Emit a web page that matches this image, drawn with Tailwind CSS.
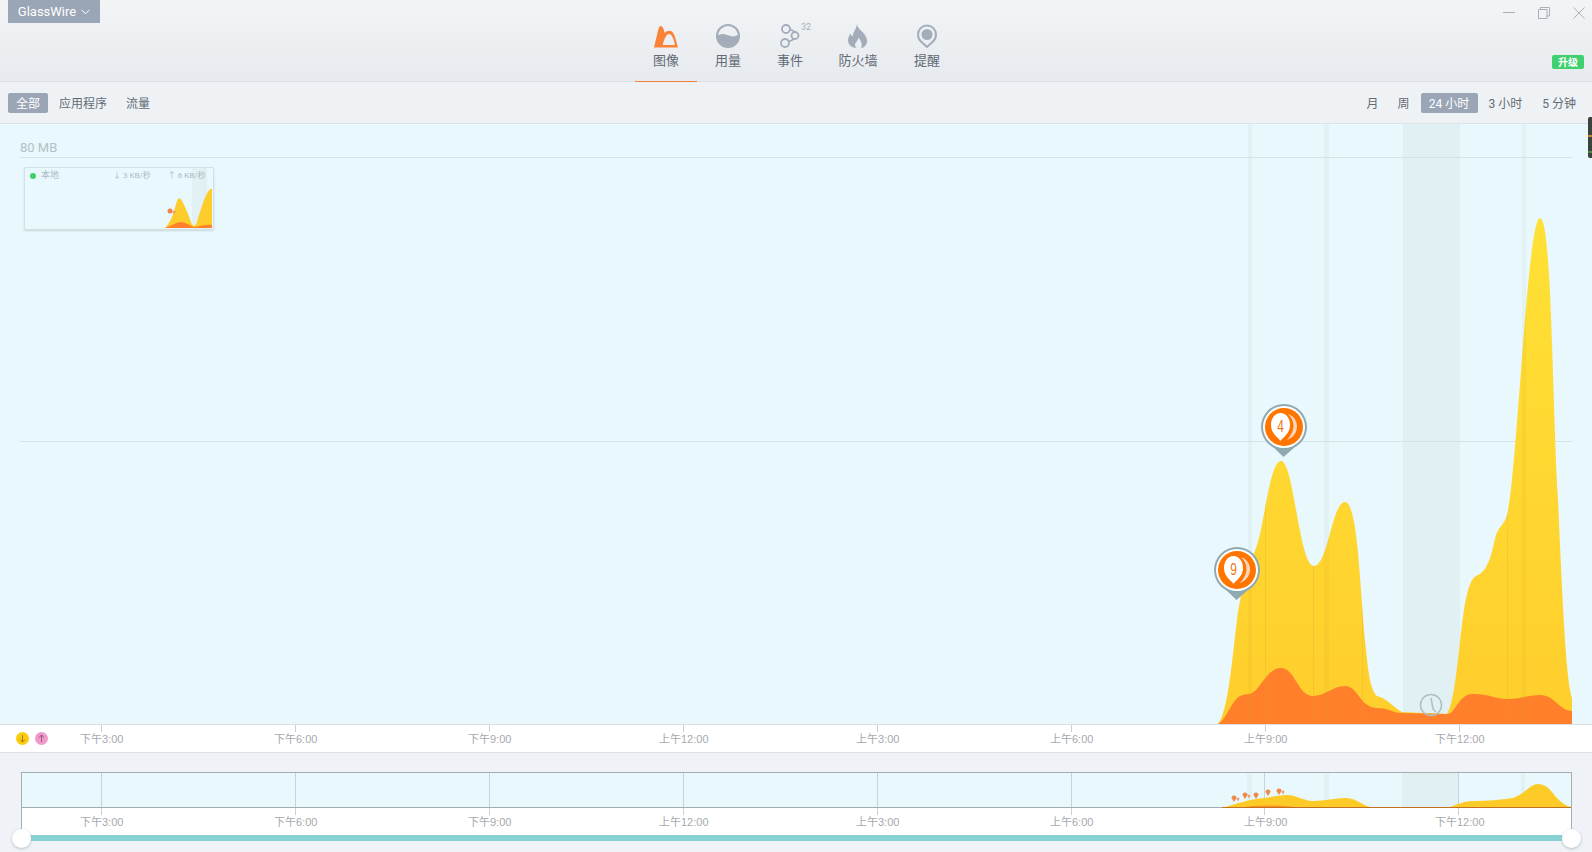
<!DOCTYPE html>
<html lang="zh">
  <head>
    <meta charset="UTF-8" />
    <title>GlassWire</title>
    <script src="https://cdn.jsdelivr.net/npm/@tailwindcss/browser@4"></script>
  </head>
  <body class="h-[852px] w-[1592px] overflow-hidden bg-[#eff3f7] font-['Roboto','Noto_Sans_CJK_SC',sans-serif] text-[#616b76]">
    <!-- Top bar -->
    <header class="relative flex h-[82px] justify-center border-b border-[#dcdfe3] bg-gradient-to-b from-[#f2f4f6] to-[#e7eaee]">
      <button class="absolute left-2 top-0 flex h-[23px] w-[92px] items-center justify-center gap-[5px] bg-[#9aa5b5] text-[13px] text-white">
        GlassWire
        <svg width="9" height="6" viewBox="0 0 9 6" fill="none" stroke="#fff" stroke-width="1"><path d="M.5.8 4.5 4.8 8.5.8" /></svg>
      </button>

      <nav class="flex h-[82px] items-start pl-[2px] text-[13px]">
        <a class="flex h-[82px] w-[62px] flex-col items-center border-b border-[#f5813a] pt-[24px]">
          <svg class="h-[24px] w-[26px]" viewBox="0 0 26 24">
            <path fill="#fb8135" fill-rule="evenodd" d="M1 23.500 4 11C5.500 5 6 2 7.500 2 9.500 2 11 5 11.500 9 13 7.500 14.500 6.700 16.500 6.700 19.500 6.700 21 10 22 13L25 23.500ZM9.700 21C11 16 13 10 16 10 19 10 21 16 22 21Z" />
          </svg>
          <span class="mt-[3px] leading-[20px]">图像</span>
        </a>
        <a class="flex w-[62px] flex-col items-center pt-[24px]">
          <svg class="h-[24px] w-[24px]" viewBox="0 0 24 24">
            <circle cx="12" cy="12" r="11" fill="none" stroke="#a3adba" stroke-width="2" />
            <path fill="#a3adba" d="M1 12.500C4 9 8 9.500 12 11.300 16 13 20 13 23 10V12A11 11 0 0 1 1 12Z" />
          </svg>
          <span class="mt-[3px] leading-[20px]">用量</span>
        </a>
        <a class="relative flex w-[62px] flex-col items-center pt-[24px]">
          <svg class="h-[24px] w-[22px]" viewBox="0 0 22 24" fill="none" stroke="#a3adba" stroke-width="1.800">
            <circle cx="7" cy="5" r="4" />
            <circle cx="6" cy="19" r="4" />
            <circle cx="16" cy="11.500" r="3.500" />
            <path d="M11 5.500C13 6 14.500 7 15.500 8M9.500 17.500C11.500 17 13.500 16 15 15" />
          </svg>
          <span class="absolute left-[42px] top-[22px] text-[9px] leading-[11px] text-[#a9b2bd]">32</span>
          <span class="mt-[3px] leading-[20px]">事件</span>
        </a>
        <a class="flex w-[74px] flex-col items-center pt-[24px]">
          <svg class="h-[24px] w-[20px]" viewBox="0 0 20 24">
            <path fill="#a3adba" d="M9 0C9.500 4 13 6 15.500 9 19 13.500 20 17 18.500 20 17 22.500 15 24 13 24 14.500 21.500 14 18 10.500 13.500 10 17 7 18.500 7 21 7 22.500 8 23.500 9 24 4 24 0 21 0 16.500 0 13.500 1.500 11 2.500 9.500 3 11 3.500 12 4.500 12.500 5 8 8.500 5 9 0Z" />
          </svg>
          <span class="mt-[3px] leading-[20px]">防火墙</span>
        </a>
        <a class="flex w-[64px] flex-col items-center pt-[24px]">
          <svg class="h-[24px] w-[20px]" viewBox="0 0 20 24">
            <path fill="none" stroke="#a3adba" stroke-width="2" d="M10 23 4 17.500C2 15.800 1 13.500 1 10.500A9 9 0 0 1 19 10.500C19 13.500 18 15.800 16 17.500Z" />
            <circle cx="10" cy="10.500" r="5.500" fill="#a3adba" />
          </svg>
          <span class="mt-[3px] leading-[20px]">提醒</span>
        </a>
      </nav>

      <div class="absolute right-[7px] top-[7px] flex items-center gap-[23px]">
        <svg width="12" height="12" viewBox="0 0 12 12" stroke="#a9b0b8" fill="none"><path d="M0 5.500h12" /></svg>
        <svg width="12" height="12" viewBox="0 0 12 12" stroke="#a9b0b8" fill="none"><path d="M.5 2.500h8.500v9H.5ZM2.500 2.500V.5h9v8.500H9" /></svg>
        <svg width="12" height="12" viewBox="0 0 12 12" stroke="#a9b0b8" fill="none"><path d="m.5.5 11 11M11.500.5l-11 11" /></svg>
      </div>
      <span class="absolute left-[1552px] top-[55px] flex h-[14px] w-[32px] items-center justify-center rounded-[2px] bg-[#3fd06f] text-[10px] font-bold text-white">升级</span>
    </header>

    <!-- Filter bar -->
    <div class="flex h-[42px] items-center justify-between border-b border-[#dbe1e5] bg-[#eff2f5] pl-2 pr-[16px] text-[12px]">
      <div class="flex items-center gap-[11px]">
        <span class="flex h-5 w-10 items-center justify-center rounded-[2px] bg-[#9aa5b5] pt-[2px] text-white">全部</span>
        <span class="pt-[2px]">应用程序</span>
        <span class="ml-[8px] pt-[2px]">流量</span>
      </div>
      <div class="flex items-center">
        <span class="mr-[19px] pt-[2px]">月</span>
        <span class="mr-[11px] pt-[2px]">周</span>
        <span class="flex h-5 w-[57px] items-center justify-center rounded-[2px] bg-[#9aa5b5] pt-[2px] text-white">24 小时</span>
        <span class="ml-[11px] pt-[2px]">3 小时</span>
        <span class="ml-[20px] pt-[2px]">5 分钟</span>
      </div>
    </div>

    <!-- Main graph -->
    <main class="relative h-[600px] bg-[#e8f8fc]">
      <svg class="absolute inset-0" width="1592" height="600" viewBox="0 124 1592 600">
        <defs>
          <linearGradient id="yellow" x1="0" y1="218" x2="0" y2="724" gradientUnits="userSpaceOnUse">
            <stop offset="0" stop-color="#ffe135" />
            <stop offset="1" stop-color="#ffce2c" />
          </linearGradient>
          <clipPath id="yellow-area">
            <path d="M1218 724C1228 712 1232 660 1237 620 1242 582 1250 565 1257 545 1265 520 1270 461 1281 461 1294 461 1299 566 1314 566 1328 566 1332 502 1345 502 1358 502 1360 590 1365 640 1368 670 1370 690 1377 696 1386 698 1392 706 1402 712L1447 714C1456 700 1459 640 1464 610 1468 585 1472 577 1478 575 1490 570 1493 545 1496 535 1500 525 1504 525 1507 515 1517 480 1527 218 1540 218 1552 218 1552 400 1558 500 1562 590 1565 660 1570 690 1571 695 1572 698 1572 700V724Z" />
          </clipPath>
        </defs>
        <rect x="1248" y="124" width="4" height="600" fill="#e1f1f4" />
        <rect x="1324" y="124" width="5" height="600" fill="#e1f1f4" />
        <rect x="1403" y="124" width="57" height="600" fill="#e1f0f2" />
        <rect x="1522" y="124" width="4" height="600" fill="#e1f1f4" />
        <path d="M20 157.500H1572M20 441.500H1572" stroke="#d3e3e6" />
        <path fill="url(#yellow)" d="M1218 724C1228 712 1232 660 1237 620 1242 582 1250 565 1257 545 1265 520 1270 461 1281 461 1294 461 1299 566 1314 566 1328 566 1332 502 1345 502 1358 502 1360 590 1365 640 1368 670 1370 690 1377 696 1386 698 1392 706 1402 712L1447 714C1456 700 1459 640 1464 610 1468 585 1472 577 1478 575 1490 570 1493 545 1496 535 1500 525 1504 525 1507 515 1517 480 1527 218 1540 218 1552 218 1552 400 1558 500 1562 590 1565 660 1570 690 1571 695 1572 698 1572 700V724Z" />
        <path fill="#ff7f2b" d="M1218 724C1226 720 1232 700 1240 696 1246 693 1250 696 1256 690 1264 681 1270 668 1281 668 1295 668 1298 696 1313 696 1326 696 1332 686 1345 686 1358 686 1360 707 1376 708 1390 708 1392 713 1402 713L1447 714C1456 714 1458 694 1473 694 1490 694 1495 699 1507 699 1522 699 1528 695 1540 695 1555 695 1558 710 1572 711V724Z" />
        <g clip-path="url(#yellow-area)">
          <path d="M1265.500 124V724M1313.500 124V724M1362.500 124V724M1507.500 124V724" stroke="#d9a52a" stroke-opacity=".25" />
          <rect x="1248" y="124" width="4" height="600" fill="#d9a52a" fill-opacity=".12" />
          <rect x="1324" y="124" width="5" height="600" fill="#d9a52a" fill-opacity=".12" />
          <rect x="1522" y="124" width="4" height="600" fill="#d9a52a" fill-opacity=".12" />
        </g>
        <g fill="none" stroke="#aebfc4" stroke-width="1.500">
          <circle cx="1431" cy="705" r="10.500" />
          <path d="M1431 698 1433 709 1436 712" />
        </g>
        <!-- Pin 4 -->
        <g transform="translate(1284 427)">
          <path fill="#8fa9b0" d="M-12 19-.5 30 12 19Z" />
          <circle r="23" fill="#8fa9b0" />
          <circle r="21" fill="#fff" />
          <circle r="19" fill="#ff7500" />
          <path fill="#fcd5bb" d="M4-13C11-11 14.500-3 12.500 3 11 8 8 11 3 13 7 8 9.500 4 9.500-1 9.500-6 7-10 4-13Z" />
          <path fill="#fff" d="M-3.500 14C-5 11-13 7-13-2-13-9-9-14-3.500-14 2-14 6-9 6-2 6 7-2 11-3.500 14Z" />
          <text transform="translate(-3.500 4.500) scale(.75 1)" text-anchor="middle" font-size="16" fill="#f0761a" font-family="Liberation Sans">4</text>
        </g>
        <!-- Pin 9 -->
        <g transform="translate(1237 570)">
          <path fill="#8fa9b0" d="M-12 19-.5 30 12 19Z" />
          <circle r="23" fill="#8fa9b0" />
          <circle r="21" fill="#fff" />
          <circle r="19" fill="#ff7500" />
          <path fill="#fcd5bb" d="M4-13C11-11 14.500-3 12.500 3 11 8 8 11 3 13 7 8 9.500 4 9.500-1 9.500-6 7-10 4-13Z" />
          <path fill="#fff" d="M-3.500 14C-5 11-13 7-13-2-13-9-9-14-3.500-14 2-14 6-9 6-2 6 7-2 11-3.500 14Z" />
          <text transform="translate(-3.500 4.500) scale(.75 1)" text-anchor="middle" font-size="16" fill="#f0761a" font-family="Liberation Sans">9</text>
        </g>
      </svg>

      <!-- Local adapter mini card -->
      <div class="absolute left-[24px] top-[43px] h-[63px] w-[190px] overflow-hidden rounded-[2px] border border-[#d3e1e5] bg-[#e8f8fc] shadow-[0_1px_2px_#c9d5d9]">
        <svg class="absolute inset-0" width="188" height="61" viewBox="0 0 188 61">
          <rect x="167" y="0" width="11" height="61" fill="#e1f1f4" />
          <rect x="178" y="0" width="4" height="61" fill="#dfeff2" />
          <path fill="#fdcd2b" d="M140 60C146 54 149 44 151 36 153 29 155 29 157 33 161 40 164 48 166 54 168 59 170 59 172 54 175 44 180 26 185 21L187 21V60Z" />
          <path fill="#ff7f2b" d="M140 60C146 58 150 55 155 54 160 54 164 57 169 59 174 59 180 56 187 57V60Z" />
          <circle cx="145" cy="43" r="2.500" fill="#f08050" />
          <circle cx="149" cy="44" r="1.500" fill="#f0a060" />
        </svg>
        <div class="relative flex h-[16px] items-center whitespace-nowrap text-[9px] text-[#a9bcc2]">
          <span class="ml-[5px] h-[6px] w-[6px] shrink-0 rounded-full bg-[#3fcf63]"></span>
          <span class="ml-[5px]">本地</span>
          <span class="ml-[54px] text-[8px]">↓ 3 KB/秒</span>
          <span class="ml-[17px] text-[8px]">↑ 6 KB/秒</span>
        </div>
      </div>

      <span class="absolute left-[20px] top-[14px] text-[13px] text-[#b2c1c7]">80 MB</span>
      <div class="absolute right-0 top-[-7px] flex h-[41px] w-[4px] flex-col rounded-l-[2px] bg-[#3d423c] pt-[18px]">
        <i class="h-[2px] bg-[#c98a2a]"></i>
        <i class="mt-[14px] h-[2px] bg-[#4f8a4a]"></i>
      </div>
    </main>

    <!-- Time axis -->
    <div class="relative h-[29px] border-y border-[#dde1e6] bg-white font-['Liberation_Sans','Noto_Sans_CJK_SC',sans-serif] text-[11px] leading-[13px] text-[#a5a9ae]">
      <span class="absolute left-[16px] top-[7px] flex h-[13px] w-[13px] items-center justify-center rounded-full bg-[#fdcb0f]">
        <svg width="9" height="9" viewBox="0 0 9 9" fill="none" stroke="#8a6a10" stroke-width=".8"><path d="M4.500 1V8M2 5.500 4.500 8 7 5.500" /></svg>
      </span>
      <span class="absolute left-[35px] top-[7px] flex h-[13px] w-[13px] items-center justify-center rounded-full bg-[#f199c9]">
        <svg width="9" height="9" viewBox="0 0 9 9" fill="none" stroke="#7a4a6a" stroke-width=".8"><path d="M4.500 8V1M2 3.500 4.500 1 7 3.500" /></svg>
      </span>
      <span class="absolute left-[80px] top-[8px]">下午3:00</span><i class="absolute left-[101px] top-0 h-[7px] w-px bg-[#ccd1d6]"></i>
      <span class="absolute left-[274px] top-[8px]">下午6:00</span><i class="absolute left-[295px] top-0 h-[7px] w-px bg-[#ccd1d6]"></i>
      <span class="absolute left-[468px] top-[8px]">下午9:00</span><i class="absolute left-[489px] top-0 h-[7px] w-px bg-[#ccd1d6]"></i>
      <span class="absolute left-[659px] top-[8px]">上午12:00</span><i class="absolute left-[683px] top-0 h-[7px] w-px bg-[#ccd1d6]"></i>
      <span class="absolute left-[856px] top-[8px]">上午3:00</span><i class="absolute left-[877px] top-0 h-[7px] w-px bg-[#ccd1d6]"></i>
      <span class="absolute left-[1050px] top-[8px]">上午6:00</span><i class="absolute left-[1071px] top-0 h-[7px] w-px bg-[#ccd1d6]"></i>
      <span class="absolute left-[1244px] top-[8px]">上午9:00</span><i class="absolute left-[1265px] top-0 h-[7px] w-px bg-[#ccd1d6]"></i>
      <span class="absolute left-[1435px] top-[8px]">下午12:00</span><i class="absolute left-[1459px] top-0 h-[7px] w-px bg-[#ccd1d6]"></i>
    </div>

    <!-- Overview timeline -->
    <section class="relative h-[100px]">
      <div class="absolute left-[21px] top-[19px] h-[64px] w-[1551px] border-x border-t border-[#a4adb0] bg-white font-['Liberation_Sans','Noto_Sans_CJK_SC',sans-serif] text-[11px] leading-[13px] text-[#a5a9ae]">
        <svg class="absolute left-0 top-0" width="1549" height="35" viewBox="22 772 1549 35">
          <rect x="22" y="772" width="1549" height="35" fill="#e8f8fc" />
          <rect x="1247" y="772" width="5" height="35" fill="#e1f1f4" />
          <rect x="1324" y="772" width="5" height="35" fill="#e1f1f4" />
          <rect x="1402" y="772" width="57" height="35" fill="#e1f0f2" />
          <rect x="1521" y="772" width="4" height="35" fill="#e1f1f4" />
          <path d="M101.500 772V806M295.500 772V806M489.500 772V806M683.500 772V806M877.500 772V806M1071.500 772V806M1264.500 772V806M1458.500 772V806" stroke="#c5d2d6" />
          <path fill="#fdcb27" d="M1222 807C1235 803 1250 798 1264 797 1272 796 1280 794 1287 794 1297 794 1303 800 1313 800 1325 800 1335 797 1345 797 1356 797 1360 803 1370 806L1450 806C1458 803 1465 800 1473 800 1487 800 1500 799 1513 797 1525 793 1530 783 1538 783 1548 783 1552 792 1557 797 1562 802 1566 805 1571 806V807Z" />
          <path fill="#ff8f1f" d="M1240 807C1255 804 1275 804 1295 806L1300 807Z" />
          <path fill="#f08a4b" d="M1231.500 797a2.500 2.500 0 1 1 5 0l-2.500 4ZM1242.500 794a2.500 2.500 0 1 1 5 0l-2.500 4ZM1253.500 794a2.500 2.500 0 1 1 5 0l-2.500 4ZM1265.500 791a2.500 2.500 0 1 1 5 0l-2.500 4ZM1276.500 790a2.500 2.500 0 1 1 5 0l-2.500 4Z" />
          <path fill="#f0a070" d="M1236.500 798a1.500 1.500 0 1 1 3 0l-1.500 2.500ZM1247.500 795a1.500 1.500 0 1 1 3 0l-1.500 2.500ZM1281.500 791a1.500 1.500 0 1 1 3 0l-1.500 2.500Z" />
          <path d="M22 806.500H1571" stroke="#a4adb0" />
          <path d="M1222 806.500H1571" stroke="#c4701e" />
        </svg>
        <i class="absolute left-[79px] top-[35px] h-[7px] w-px bg-[#ccd1d6]"></i><span class="absolute left-[58px] top-[43px]">下午3:00</span>
        <i class="absolute left-[273px] top-[35px] h-[7px] w-px bg-[#ccd1d6]"></i><span class="absolute left-[252px] top-[43px]">下午6:00</span>
        <i class="absolute left-[467px] top-[35px] h-[7px] w-px bg-[#ccd1d6]"></i><span class="absolute left-[446px] top-[43px]">下午9:00</span>
        <i class="absolute left-[661px] top-[35px] h-[7px] w-px bg-[#ccd1d6]"></i><span class="absolute left-[637px] top-[43px]">上午12:00</span>
        <i class="absolute left-[855px] top-[35px] h-[7px] w-px bg-[#ccd1d6]"></i><span class="absolute left-[834px] top-[43px]">上午3:00</span>
        <i class="absolute left-[1049px] top-[35px] h-[7px] w-px bg-[#ccd1d6]"></i><span class="absolute left-[1028px] top-[43px]">上午6:00</span>
        <i class="absolute left-[1242px] top-[35px] h-[7px] w-px bg-[#ccd1d6]"></i><span class="absolute left-[1222px] top-[43px]">上午9:00</span>
        <i class="absolute left-[1436px] top-[35px] h-[7px] w-px bg-[#ccd1d6]"></i><span class="absolute left-[1413px] top-[43px]">下午12:00</span>
      </div>
      <div class="absolute left-[21px] top-[82px] h-[6px] w-[1551px] bg-[#85d1d3]"></div>
      <span class="absolute left-[12px] top-[76px] h-[19px] w-[19px] rounded-full bg-white shadow-[0_1px_3px_#b4bcc2]"></span>
      <span class="absolute left-[1562px] top-[76px] h-[19px] w-[19px] rounded-full bg-white shadow-[0_1px_3px_#b4bcc2]"></span>
    </section>
  </body>
</html>
